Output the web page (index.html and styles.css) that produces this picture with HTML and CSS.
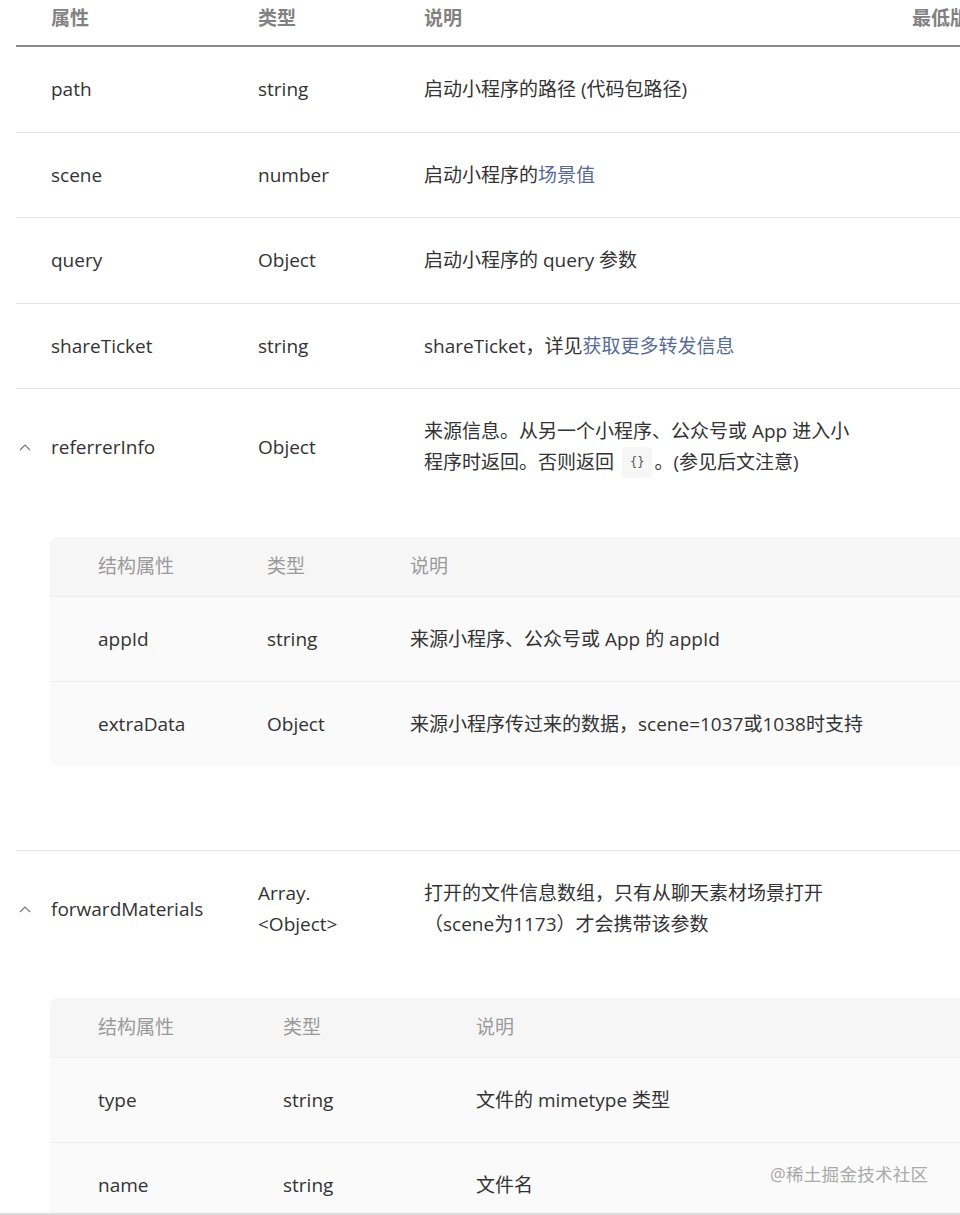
FILE: index.html
```html
<!DOCTYPE html>
<html lang="zh-CN">
<head>
<meta charset="utf-8">
<title>属性</title>
<link rel="stylesheet" href="styles.css">
</head>
<body>
<div class="doc">
  <div class="grid head">
    <div class="tg"></div>
    <div class="c1">属性</div>
    <div class="c2">类型</div>
    <div class="c3">说明</div>
    <div class="c4">最低版本</div>
  </div>

  <div class="row">
    <div class="grid">
      <div class="tg"></div>
      <div class="c1">path</div>
      <div class="c2">string</div>
      <div class="c3">启动小程序的路径 (代码包路径)</div>
      <div class="c4"></div>
    </div>
  </div>

  <div class="row">
    <div class="grid">
      <div class="tg"></div>
      <div class="c1">scene</div>
      <div class="c2">number</div>
      <div class="c3">启动小程序的<a class="link" href="#">场景值</a></div>
      <div class="c4"></div>
    </div>
  </div>

  <div class="row">
    <div class="grid">
      <div class="tg"></div>
      <div class="c1">query</div>
      <div class="c2">Object</div>
      <div class="c3">启动小程序的 query 参数</div>
      <div class="c4"></div>
    </div>
  </div>

  <div class="row">
    <div class="grid">
      <div class="tg"></div>
      <div class="c1">shareTicket</div>
      <div class="c2">string</div>
      <div class="c3">shareTicket，详见<a class="link" href="#">获取更多转发信息</a></div>
      <div class="c4"></div>
    </div>
  </div>

  <div class="row expanded">
    <div class="grid">
      <div class="tg"><svg class="chev" width="12" height="7" viewBox="0 0 12 7"><path d="M1 6 L6 1 L11 6" fill="none" stroke="#777" stroke-width="1.2"/></svg></div>
      <div class="c1">referrerInfo</div>
      <div class="c2">Object</div>
      <div class="c3">来源信息。从另一个小程序、公众号或 App 进入小程序时返回。否则返回 <code class="code">{}</code>。(参见后文注意)</div>
      <div class="c4"></div>
    </div>
    <div class="sub sub-ref">
      <div class="sgrid shead">
        <div>结构属性</div><div>类型</div><div>说明</div>
      </div>
      <div class="sgrid srow">
        <div>appId</div><div>string</div><div>来源小程序、公众号或 App 的 appId</div>
      </div>
      <div class="sgrid srow">
        <div>extraData</div><div>Object</div><div>来源小程序传过来的数据，scene=1037或1038时支持</div>
      </div>
    </div>
  </div>

  <div class="row expanded last">
    <div class="grid">
      <div class="tg"><svg class="chev" width="12" height="7" viewBox="0 0 12 7"><path d="M1 6 L6 1 L11 6" fill="none" stroke="#777" stroke-width="1.2"/></svg></div>
      <div class="c1">forwardMaterials</div>
      <div class="c2">Array.<br>&lt;Object&gt;</div>
      <div class="c3">打开的文件信息数组，只有从聊天素材场景打开（scene为1173）才会携带该参数</div>
      <div class="c4"></div>
    </div>
    <div class="sub sub-fwd">
      <div class="sgrid shead">
        <div>结构属性</div><div>类型</div><div>说明</div>
      </div>
      <div class="sgrid srow">
        <div>type</div><div>string</div><div>文件的 mimetype 类型</div>
      </div>
      <div class="sgrid srow">
        <div>name</div><div>string</div><div>文件名</div>
      </div>
    </div>
  </div>
</div>
<div class="watermark">@稀土掘金技术社区</div>
<div class="edge"></div>
</body>
</html>
```

FILE: styles.css
```css
html, body {
  margin: 0;
  padding: 0;
  background: #ffffff;
  overflow: hidden;
}

body {
  width: 960px;
  height: 1215px;
  position: relative;
  font-family: "Open Sans", "Noto Sans CJK SC", sans-serif;
  font-size: 19px;
  line-height: 31px;
  color: #333333;
}

.doc {
  margin-left: 16px;
  width: 1120px;
}

.grid {
  display: grid;
  grid-template-columns: 35px 207px 166px 488px 1fr;
  align-items: center;
}

.grid > .c2 {
  padding-right: 30px;
}

.grid > .c3 {
  padding-right: 48px;
}

.grid > .c4 {
  white-space: nowrap;
}

.head {
  padding: 3px 0 11px;
  border-bottom: 2px solid #8a8a8a;
  color: #828282;
  font-weight: 700;
}

.row {
  border-bottom: 1px solid #e6e6e6;
}

.row > .grid {
  padding: 27px 0 26.6px;
}

.row.expanded > .grid {
  padding-bottom: 0;
}

.row.last {
  border-bottom: none;
}

.tg {
  display: flex;
  align-items: center;
  align-self: center;
  padding-left: 3px;
}

.chev {
  display: block;
}

.link {
  color: #576b95;
  text-decoration: none;
}

.code {
  display: inline-block;
  vertical-align: top;
  font-family: "DejaVu Sans Mono", "Liberation Mono", monospace;
  font-size: 12px;
  line-height: 31px;
  background: #f6f6f6;
  color: #555555;
  padding: 0 8px;
  margin: 0 2px 0 3px;
  border-radius: 3px;
}

.sub {
  margin: 59px 0 84px 34px;
  border-radius: 8px;
  background: #fafafa;
  overflow: hidden;
}

.sub-fwd {
  margin-top: 58px;
}

.sgrid {
  display: grid;
  align-items: center;
}

.sub-ref .sgrid {
  grid-template-columns: 169px 143px 1fr;
}

.sub-fwd .sgrid {
  grid-template-columns: 185px 193px 1fr;
}

.shead {
  background: #f6f6f6;
  color: #9a9a9a;
  padding: 14px 0 14px 48px;
  border-bottom: 1px solid #efefef;
}

.srow {
  padding: 26.5px 0 26.5px 48px;
  border-bottom: 1px solid #ececec;
}

.srow:last-child {
  border-bottom: none;
}

.watermark {
  position: absolute;
  left: 770px;
  top: 1160px;
  font-size: 17.5px;
  line-height: 28px;
  color: #a9a9a9;
  letter-spacing: 0.3px;
}

.edge {
  position: absolute;
  left: 0;
  right: 0;
  bottom: 0;
  height: 2px;
  background: #dcdcdc;
}
```
